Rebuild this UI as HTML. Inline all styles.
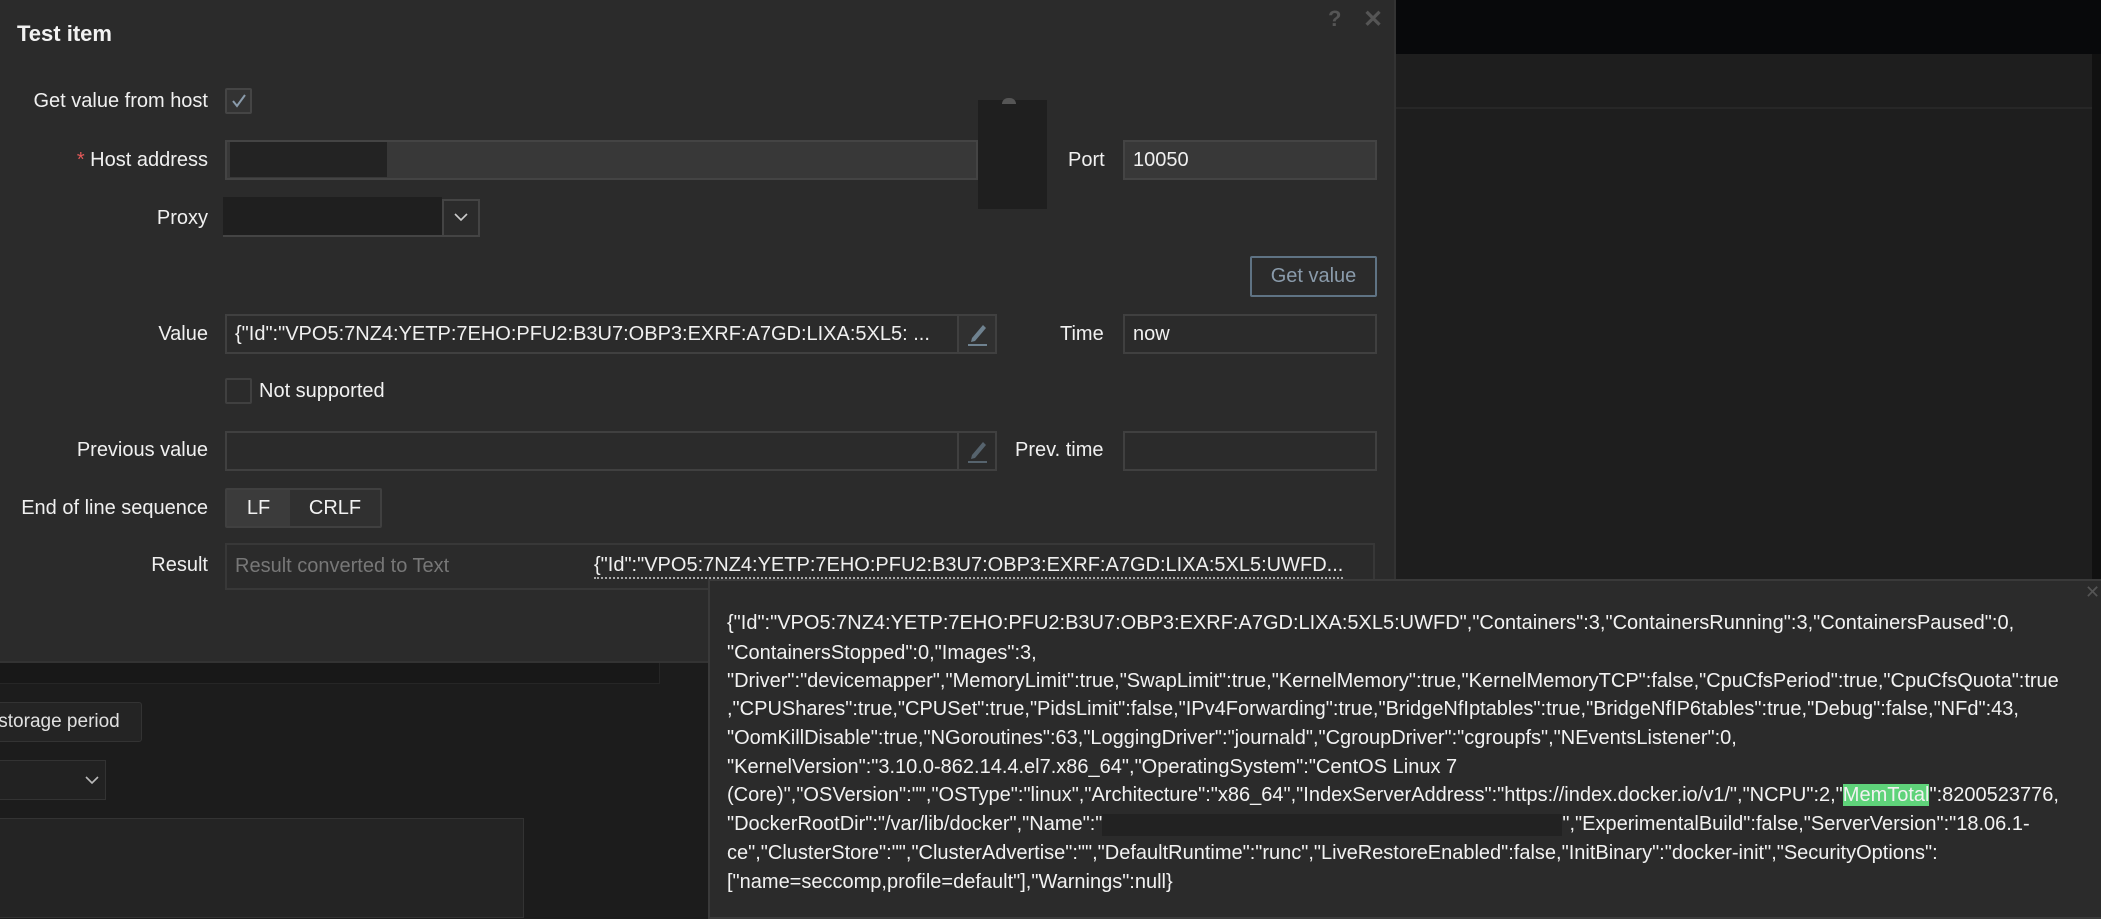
<!DOCTYPE html>
<html><head><meta charset="utf-8"><style>
*{box-sizing:border-box;margin:0;padding:0}
body{width:2101px;height:909px;overflow:hidden;background:#1c1c1c;font-family:"Liberation Sans",sans-serif;position:relative;color:#f2f2f2}
.a{position:absolute}
.lbl{position:absolute;right:1893px;font-size:20px;color:#f0f0f0;white-space:nowrap;line-height:24px}
.inp{position:absolute;border:2px solid #404040;background:#2b2b2b;font-size:20px;line-height:36px;padding-left:8px;white-space:nowrap;overflow:hidden;color:#f0f0f0}
.pen{position:absolute;border:2px solid #404040;background:#303030}
.pp{position:absolute;left:727px;font-size:20px;line-height:24px;white-space:nowrap;color:#f2f2f2}
</style></head><body>
<div class="a" style="left:1396px;top:0;width:705px;height:54px;background:#08090b"></div>
<div class="a" style="left:1396px;top:54px;width:696px;height:560px;background:#1e1e1e;border-bottom:none"></div>
<div class="a" style="left:1396px;top:107px;width:696px;height:2px;background:#272727"></div>
<div class="a" style="left:2092px;top:54px;width:9px;height:560px;background:#111"></div>
<div class="a" style="left:0;top:662px;width:660px;height:22px;background:#181818;border-bottom:1px solid #262626;border-right:1px solid #262626"></div>
<div class="a" style="left:-4px;top:702px;width:146px;height:40px;border:1px solid #333;border-radius:3px;background:#242424;font-size:19px;line-height:38px;color:#e0e0e0;text-indent:-4px;padding-left:0">&nbsp;storage period</div>
<div class="a" style="left:-4px;top:760px;width:110px;height:40px;border:1px solid #333;background:#222"></div>
<svg class="a" style="left:84px;top:774px" width="16" height="12"><path d="M2 3 L8 9 L14 3" fill="none" stroke="#bbb" stroke-width="1.6"/></svg>
<div class="a" style="left:-4px;top:818px;width:528px;height:100px;border:1px solid #333;background:#242424"></div>

<div class="a" style="left:0;top:0;width:1396px;height:663px;background:#2b2b2b;border-right:2px solid #333;border-bottom:2px solid #333"></div>
<div class="a" style="left:17px;top:21px;font-size:22px;font-weight:bold;color:#f2f2f2">Test item</div>
<div class="a" style="left:1328px;top:6px;font-size:22px;color:#555;font-weight:bold">?</div>
<div class="a" style="left:1363px;top:5px;font-size:24px;color:#555;font-weight:bold">✕</div>

<div class="lbl" style="top:89px">Get value from host</div>
<div class="a" style="left:225px;top:88px;width:27px;height:26px;border:2px solid #454545;background:#333;border-radius:2px"></div>
<svg class="a" style="left:229px;top:92px" width="20" height="18"><path d="M4 9 L8 14 L16 3" fill="none" stroke="#8a9bab" stroke-width="2"/></svg>

<div class="lbl" style="top:148px"><span style="color:#e45959">*</span> Host address</div>
<div class="a" style="left:225px;top:140px;width:753px;height:40px;background:#383838;border:2px solid #444"></div>
<div class="a" style="left:230px;top:142px;width:157px;height:35px;background:#232323"></div>
<div class="a" style="left:978px;top:100px;width:69px;height:109px;background:#1f1f1f"></div>
<div class="a" style="left:1002px;top:98px;width:14px;height:6px;border-radius:7px 7px 0 0;background:#555"></div>
<div class="lbl" style="top:148px;right:auto;left:1068px">Port</div>
<div class="inp" style="left:1123px;top:140px;width:254px;height:40px;background:#383838;border-color:#444">10050</div>

<div class="lbl" style="top:206px">Proxy</div>
<div class="a" style="left:223px;top:197px;width:219px;height:40px;background:#1f1f1f;border-bottom:2px solid #444"></div>
<div class="a" style="left:442px;top:199px;width:38px;height:38px;border:2px solid #444;background:#2b2b2b"></div>
<svg class="a" style="left:453px;top:211px" width="16" height="12"><path d="M2 3 L8 9 L14 3" fill="none" stroke="#ccc" stroke-width="1.6"/></svg>

<div class="a" style="left:1250px;top:256px;width:127px;height:41px;border:2px solid #5f7384;border-radius:2px;font-size:20px;line-height:37px;text-align:center;color:#8a9bab">Get value</div>

<div class="lbl" style="top:322px">Value</div>
<div class="inp" style="left:225px;top:314px;width:734px;height:40px">{"Id":"VPO5:7NZ4:YETP:7EHO:PFU2:B3U7:OBP3:EXRF:A7GD:LIXA:5XL5: ...</div>
<div class="pen" style="left:957px;top:314px;width:40px;height:40px"></div>
<svg class="a" style="left:962px;top:319px" width="30" height="30"><path d="M10 19 L21 6 L24 9 L13 22 L9 23 Z" fill="#6f8290"/><path d="M6 26 L25 26" stroke="#6f8290" stroke-width="2"/></svg>
<div class="lbl" style="top:322px;right:auto;left:1060px">Time</div>
<div class="inp" style="left:1123px;top:314px;width:254px;height:40px">now</div>

<div class="a" style="left:225px;top:378px;width:27px;height:26px;border:2px solid #404040;background:#2b2b2b;border-radius:2px"></div>
<div class="a" style="left:259px;top:380px;font-size:20px">Not supported</div>

<div class="lbl" style="top:438px">Previous value</div>
<div class="inp" style="left:225px;top:431px;width:734px;height:40px"></div>
<div class="pen" style="left:957px;top:431px;width:40px;height:40px;background:#2b2b2b"></div>
<svg class="a" style="left:962px;top:436px" width="30" height="30"><path d="M10 19 L21 6 L24 9 L13 22 L9 23 Z" fill="#56636d"/><path d="M6 26 L25 26" stroke="#56636d" stroke-width="2"/></svg>
<div class="lbl" style="top:438px;right:auto;left:1015px">Prev. time</div>
<div class="inp" style="left:1123px;top:431px;width:254px;height:40px"></div>

<div class="lbl" style="top:496px">End of line sequence</div>
<div class="a" style="left:225px;top:488px;width:157px;height:40px;border:2px solid #404040;background:#303030;border-radius:2px"></div>
<div class="a" style="left:227px;top:490px;width:63px;height:36px;background:#3b3b3b;font-size:20px;line-height:36px;text-align:center">LF</div>
<div class="a" style="left:290px;top:490px;width:90px;height:36px;font-size:20px;line-height:36px;text-align:center">CRLF</div>

<div class="lbl" style="top:553px">Result</div>
<div class="inp" style="left:225px;top:543px;width:1150px;height:47px;line-height:43px;border-color:#383838;color:#777">Result converted to Text</div>
<div class="a" style="left:594px;top:553px;font-size:20px;line-height:24px;white-space:nowrap;border-bottom:2px dotted #aaa;color:#f0f0f0">{"Id":"VPO5:7NZ4:YETP:7EHO:PFU2:B3U7:OBP3:EXRF:A7GD:LIXA:5XL5:UWFD...</div>

<div class="a" style="left:708px;top:579px;width:1400px;height:340px;background:#2b2b2b;border:2px solid #3a3a3a"></div>
<div class="a" style="left:2085px;top:582px;font-size:18px;color:#555">✕</div>
<div class="pp" style="top:611px">{"Id":"VPO5:7NZ4:YETP:7EHO:PFU2:B3U7:OBP3:EXRF:A7GD:LIXA:5XL5:UWFD","Containers":3,"ContainersRunning":3,"ContainersPaused":0,</div>
<div class="pp" style="top:641px">"ContainersStopped":0,"Images":3,</div>
<div class="pp" style="top:669px">"Driver":"devicemapper","MemoryLimit":true,"SwapLimit":true,"KernelMemory":true,"KernelMemoryTCP":false,"CpuCfsPeriod":true,"CpuCfsQuota":true</div>
<div class="pp" style="top:697px">,"CPUShares":true,"CPUSet":true,"PidsLimit":false,"IPv4Forwarding":true,"BridgeNfIptables":true,"BridgeNfIP6tables":true,"Debug":false,"NFd":43,</div>
<div class="pp" style="top:726px">"OomKillDisable":true,"NGoroutines":63,"LoggingDriver":"journald","CgroupDriver":"cgroupfs","NEventsListener":0,</div>
<div class="pp" style="top:755px">"KernelVersion":"3.10.0-862.14.4.el7.x86_64","OperatingSystem":"CentOS Linux 7</div>
<div class="pp" style="top:783px">(Core)","OSVersion":"","OSType":"linux","Architecture":"x86_64","IndexServerAddress":"https://index.docker.io/v1/","NCPU":2,"<span style="background:#5fd37a">MemTotal</span>":8200523776,</div>
<div class="pp" style="top:812px">"DockerRootDir":"/var/lib/docker","Name":"<span style="display:inline-block;width:460px;height:22px;background:#222;vertical-align:middle"></span>","ExperimentalBuild":false,"ServerVersion":"18.06.1-</div>
<div class="pp" style="top:841px">ce","ClusterStore":"","ClusterAdvertise":"","DefaultRuntime":"runc","LiveRestoreEnabled":false,"InitBinary":"docker-init","SecurityOptions":</div>
<div class="pp" style="top:870px">["name=seccomp,profile=default"],"Warnings":null}</div>
</body></html>
